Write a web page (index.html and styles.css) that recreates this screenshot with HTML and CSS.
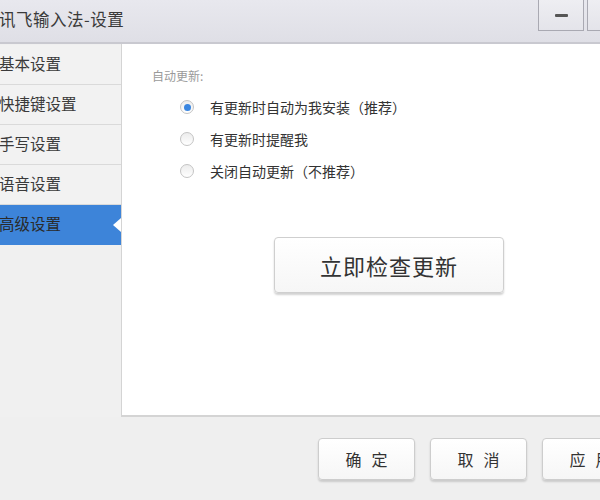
FILE: index.html
```html
<!DOCTYPE html>
<html lang="zh-CN">
<head>
<meta charset="utf-8">
<title>讯飞输入法-设置</title>
<link rel="stylesheet" href="styles.css">
</head>
<body>
<div class="window">
  <header class="titlebar">
    <div class="title">讯飞输入法-设置</div>
    <div class="win-btns">
      <div class="win-btn"><span class="min-bar"></span></div>
      <div class="win-btn"></div>
    </div>
  </header>
  <div class="main">
    <nav class="sidebar">
      <div class="nav-item">基本设置</div>
      <div class="nav-item">快捷键设置</div>
      <div class="nav-item">手写设置</div>
      <div class="nav-item">语音设置</div>
      <div class="nav-item active">高级设置</div>
    </nav>
    <section class="content">
      <div class="group-label">自动更新:</div>
      <div class="options">
        <label class="option"><span class="radio checked"></span><span>有更新时自动为我安装（推荐）</span></label>
        <label class="option"><span class="radio"></span><span>有更新时提醒我</span></label>
        <label class="option"><span class="radio"></span><span>关闭自动更新（不推荐）</span></label>
      </div>
      <div class="check-wrap">
        <button class="check-btn">立即检查更新</button>
      </div>
    </section>
  </div>
  <footer class="footer">
    <button class="btn">确定</button>
    <button class="btn">取消</button>
    <button class="btn">应用</button>
  </footer>
</div>
</body>
</html>
```

FILE: styles.css
```css
* { box-sizing: border-box; }
html, body { margin: 0; padding: 0; }
body {
  font-family: "Noto Sans CJK SC", "Noto Sans", sans-serif;
  color: #333;
  background: #f0f0f0;
}
.window {
  width: 600px;
  height: 500px;
  display: flex;
  flex-direction: column;
  overflow: hidden;
  background: #f0f0f0;
}
.titlebar {
  height: 44px;
  flex: none;
  display: flex;
  justify-content: space-between;
  background: linear-gradient(#e8e8ee, #dfdfe6);
  border-bottom: 2px solid #c9c9d0;
  overflow: hidden;
}
.title {
  font-size: 16.5px;
  line-height: 17px;
  color: #3a3a3a;
  padding-top: 11px;
  margin-left: -1px;
  letter-spacing: 0.5px;
}
.win-btns {
  display: flex;
  gap: 3px;
  margin-right: -33px;
  align-self: flex-start;
}
.win-btn {
  width: 46px;
  height: 31px;
  border: 1px solid #a9a9b2;
  border-top: none;
  background: linear-gradient(#eeeef2, #e4e4ea);
  display: flex;
  align-items: center;
  justify-content: center;
}
.min-bar {
  width: 13px;
  height: 3px;
  background: #555;
  border-radius: 1px;
}
.main {
  height: 373px;
  flex: none;
  display: flex;
}
.sidebar {
  width: 121px;
  flex: none;
  display: flex;
  flex-direction: column;
  background: #f0f0f0;
  padding-top: 1px;
}
.nav-item {
  position: relative;
  height: 40px;
  line-height: 36px;
  font-size: 15.5px;
  color: #3a3a3a;
  padding-left: 0;
  margin-left: -1px;
  border-bottom: 1px solid #dadada;
  background: #f2f2f2;
}
.nav-item.active {
  background: #3d84d9;
  border-bottom-color: #3d84d9;
  color: #2a2a2a;
}
.nav-item.active::after {
  content: "";
  position: absolute;
  right: 0;
  top: 13px;
  border-top: 7px solid transparent;
  border-bottom: 7px solid transparent;
  border-right: 8px solid #ffffff;
}
.content {
  flex: 1;
  background: #ffffff;
  border-left: 1px solid #d4d4d4;
  border-bottom: 2px solid #d4d4d4;
  padding: 22px 0 0 30px;
  display: flex;
  flex-direction: column;
}
.group-label {
  font-size: 12px;
  line-height: 20px;
  color: #9a9a9a;
}
.options {
  display: flex;
  flex-direction: column;
  gap: 12px;
  padding-left: 29px;
  margin-top: 11px;
}
.option {
  display: flex;
  align-items: center;
  font-size: 14px;
  line-height: 20px;
  color: #333;
}
.radio {
  width: 14px;
  height: 14px;
  border-radius: 50%;
  border: 1px solid #c4c4c4;
  background: linear-gradient(#ececec, #ffffff);
  margin-right: 16px;
  margin-left: -1px;
  display: flex;
  align-items: center;
  justify-content: center;
}
.radio.checked::before {
  content: "";
  width: 7px;
  height: 7px;
  border-radius: 50%;
  background: #3a86e0;
}
.check-wrap {
  display: flex;
  padding-left: 122px;
  margin-top: 56px;
}
.check-btn {
  width: 230px;
  height: 56px;
  font-family: inherit;
  font-size: 22px;
  color: #333;
  letter-spacing: 1px;
  background: linear-gradient(#ffffff, #f6f6f6);
  border: 1px solid #cfcfcf;
  border-radius: 4px;
  box-shadow: 0 2px 2px rgba(0,0,0,0.18);
}
.footer {
  flex: 1;
  display: flex;
  gap: 15px;
  padding: 21px 0 0 318px;
  background: #efefef;
}
.btn {
  flex: none;
  width: 97px;
  height: 42px;
  font-family: inherit;
  font-size: 16px;
  color: #333;
  letter-spacing: 10px;
  text-indent: 10px;
  background: linear-gradient(#ffffff, #f6f6f6);
  border: 1px solid #cdcdcd;
  border-radius: 4px;
  box-shadow: 0 2px 2px rgba(0,0,0,0.15);
}
```
